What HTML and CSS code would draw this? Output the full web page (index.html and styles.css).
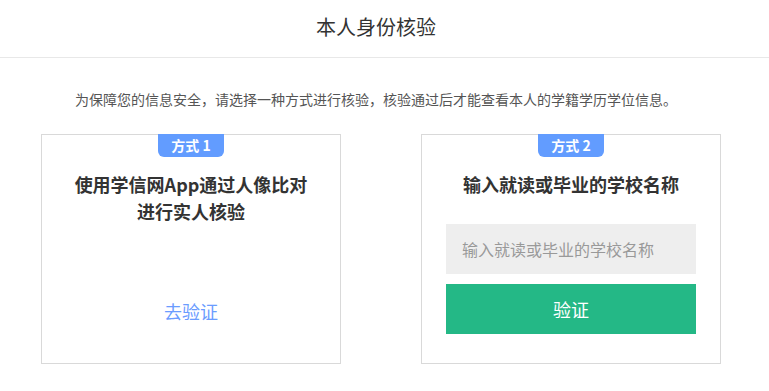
FILE: index.html
```html
<!DOCTYPE html>
<html lang="zh-CN">
<head>
    <meta charset="UTF-8">
    <meta name="viewport" content="width=device-width, initial-scale=1.0">
    <title>本人身份核验</title>
    <link rel="stylesheet" href="styles.css">
</head>
<body>
    <div class="header">
        <h1>本人身份核验</h1>
    </div>

    <div class="container">
        <p class="tip">为保障您的信息安全，请选择一种方式进行核验，核验通过后才能查看本人的学籍学历学位信息。</p>

        <div class="methods">
            <div class="card">
                <span class="badge">方式 1</span>
                <h2 class="card-title">使用学信网App通过人像比对<br>进行实人核验</h2>
                <a href="#" class="go-link">去验证</a>
            </div>

            <div class="card">
                <span class="badge">方式 2</span>
                <h2 class="card-title">输入就读或毕业的学校名称</h2>
                <form class="school-form">
                    <input type="text" class="school-input" placeholder="输入就读或毕业的学校名称">
                    <button type="submit" class="btn">验证</button>
                </form>
            </div>
        </div>
    </div>
</body>
</html>
```

FILE: styles.css
```css
:root {
    --text-color: #333333;
    --blue-color: #629cff;
    --green-color: #24b886;
    --border-color: #d9d9d9;
}

* {
    box-sizing: border-box;
    margin: 0;
    padding: 0;
}

body {
    font-family: "Noto Sans CJK SC", "Noto Sans", sans-serif;
    background-color: #fff;
    color: var(--text-color);
}

.header {
    height: 58px;
    padding-right: 17px;
    border-bottom: 1px solid #e8e8e8;
    text-align: center;
}

.header h1 {
    font-size: 20px;
    font-weight: 400;
    line-height: 54px;
    color: #333;
}

.container {
    padding: 0 41px;
}

.tip {
    margin-top: 31px;
    padding-left: 34px;
    font-size: 14px;
    line-height: 20px;
    color: #555;
}

.methods {
    display: flex;
    gap: 80px;
    margin-top: 25px;
}

.card {
    position: relative;
    width: 300px;
    height: 230px;
    border: 1px solid var(--border-color);
    padding: 36px 24px 0;
    display: flex;
    flex-direction: column;
    align-items: center;
}

.badge {
    position: absolute;
    top: -1px;
    left: 116px;
    width: 66px;
    height: 23px;
    background-color: var(--blue-color);
    border-radius: 0 0 6px 6px;
    color: #fff;
    font-size: 14px;
    font-weight: 700;
    line-height: 22px;
    text-align: center;
}

.card-title {
    font-size: 18px;
    font-weight: 700;
    line-height: 27px;
    text-align: center;
    color: #333;
}

.go-link {
    margin-top: auto;
    margin-bottom: 38px;
    font-size: 18px;
    line-height: 28px;
    color: #6b9cff;
    text-decoration: none;
}

.school-form {
    width: 250px;
    margin-top: 26px;
    display: flex;
    flex-direction: column;
    gap: 10px;
}

.school-input {
    height: 50px;
    padding: 0 16px;
    border: none;
    background-color: #eeeeee;
    font-family: inherit;
    font-size: 16px;
    color: #333;
    outline: none;
}

.school-input::placeholder {
    color: #999;
}

.btn {
    height: 50px;
    border: none;
    background-color: var(--green-color);
    color: #fff;
    font-family: inherit;
    font-size: 18px;
    cursor: pointer;
}
```
